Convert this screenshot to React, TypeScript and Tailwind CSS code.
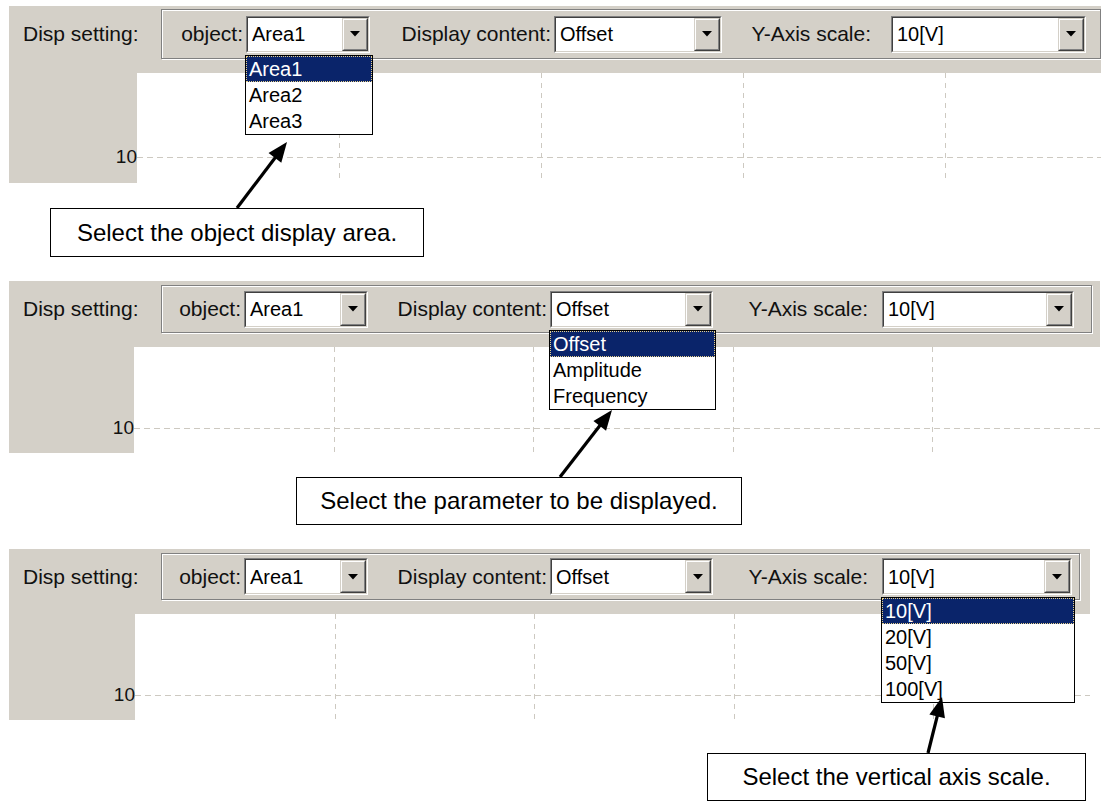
import React from 'react';

type Drop = { items: string[]; at: 0 | 1 | 2 };

interface PanelCfg {
  box: string;
  pad: string;
  frame: string;
  lbl1: string;
  lbl2: string;
  lbl3: string;
  c1: string;
  c2: string;
  c3: string;
  leftCol: string;
  plotH: string;
  tickPad: string;
  lineY: number;
  step: number;
  drop?: Drop;
}

const panels: PanelCfg[] = [
  {
    box: 'mt-0 w-[1092px] h-[177px]',
    pad: 'pt-[3px]',
    frame: 'w-[940px] h-[50px]',
    lbl1: 'w-[84px]',
    lbl2: 'w-[184px] pr-[3px]',
    lbl3: 'w-[169px] pr-[20px]',
    c1: 'w-[124px]',
    c2: 'w-[168px]',
    c3: 'w-[195px]',
    leftCol: 'w-[128px]',
    plotH: 'h-[110px]',
    tickPad: 'pt-[73px]',
    lineY: 84,
    step: 202,
    drop: { items: ['Area1', 'Area2', 'Area3'], at: 0 },
  },
  {
    box: 'mt-[24px] w-[1091px] h-[172px]',
    pad: 'pt-[4px]',
    frame: 'w-[931px] h-[48px]',
    lbl1: 'w-[82px]',
    lbl2: 'w-[182px] pr-[3px]',
    lbl3: 'w-[169px] pr-[14px]',
    c1: 'w-[124px]',
    c2: 'w-[163px]',
    c3: 'w-[192px]',
    leftCol: 'w-[125px]',
    plotH: 'h-[106px]',
    tickPad: 'pt-[70px]',
    lineY: 81,
    step: 199.5,
    drop: { items: ['Offset', 'Amplitude', 'Frequency'], at: 1 },
  },
  {
    box: 'mt-[24px] w-[1081px] h-[171px]',
    pad: 'pt-[4px]',
    frame: 'w-[919px] h-[47px]',
    lbl1: 'w-[82px]',
    lbl2: 'w-[182px] pr-[3px]',
    lbl3: 'w-[169px] pr-[14px]',
    c1: 'w-[124px]',
    c2: 'w-[163px]',
    c3: 'w-[190px]',
    leftCol: 'w-[126px]',
    plotH: 'h-[106px]',
    tickPad: 'pt-[70px]',
    lineY: 81,
    step: 199.5,
    drop: { items: ['10[V]', '20[V]', '50[V]', '100[V]'], at: 2 },
  },
];

function Combo({ value, width, items }: { value: string; width: string; items?: string[] }) {
  return (
    <div className={`relative h-[37px] shrink-0 ${width}`}>
      <div className="h-full border border-t-[#808080] border-l-[#808080] border-r-white border-b-white">
        <div className="relative h-full border border-t-[#404040] border-l-[#404040] border-r-[#d4d0c8] border-b-[#d4d0c8] bg-white flex items-center">
          <span className="pl-[4px] text-[20px] text-black leading-none">{value}</span>
          {/* drop button */}
          <div className="absolute right-0 top-0 bottom-0 w-[26px] border border-t-[#d4d0c8] border-l-[#d4d0c8] border-r-[#404040] border-b-[#404040]">
            <div className="h-full border border-t-white border-l-white border-r-[#808080] border-b-[#808080] bg-[#d4d0c8] flex items-center justify-center">
              <svg width="10" height="6" viewBox="0 0 10 6">
                <polygon points="0,0 10,0 5,5.5" fill="#000" />
              </svg>
            </div>
          </div>
        </div>
      </div>
      {items && (
        <div className="absolute z-10 left-[-1px] top-[calc(100%+2px)] w-[calc(100%+4px)] border border-black bg-white">
          {items.map((it, i) => (
            <div
              key={it}
              className={`h-[26px] flex items-center px-[3px] text-[20px] leading-none
                ${i === 0 ? 'bg-[#0a246a] text-white outline-1 outline-dotted outline-[#e6d08a] -outline-offset-1' : 'text-black'}
              `}
            >
              {it}
            </div>
          ))}
        </div>
      )}
    </div>
  );
}

function Panel({ cfg }: { cfg: PanelCfg }) {
  const xs = [1, 2, 3, 4, 5].map((k) => Math.round(cfg.step * k));
  const open = cfg.drop?.at;

  return (
    <div className={`ml-[9px] bg-[#d4d0c8] overflow-hidden flex flex-col ${cfg.box} ${cfg.pad}`}>
      {/* toolbar */}
      <div className="flex items-center">
        <div className="w-[152px] pl-[14px] shrink-0 text-[21px] text-[#111]">Disp setting:</div>
        <div
          className={`shrink-0 flex items-center border border-[#808080] shadow-[inset_1px_1px_0_#fff,1px_1px_0_#fff] ${cfg.frame}`}
        >
          <div className={`shrink-0 text-right pr-[3px] text-[21px] text-[#111] ${cfg.lbl1}`}>object:</div>
          <Combo value="Area1" width={cfg.c1} items={open === 0 ? cfg.drop?.items : undefined} />
          <div className={`shrink-0 text-right text-[21px] text-[#111] ${cfg.lbl2}`}>Display content:</div>
          <Combo value="Offset" width={cfg.c2} items={open === 1 ? cfg.drop?.items : undefined} />
          <div className={`shrink-0 text-right text-[21px] text-[#111] ${cfg.lbl3}`}>Y-Axis scale:</div>
          <Combo value="10[V]" width={cfg.c3} items={open === 2 ? cfg.drop?.items : undefined} />
        </div>
      </div>

      {/* plot */}
      <div className="mt-[14px] flex">
        <div className={`shrink-0 text-right text-[19px] leading-[22px] text-[#111] ${cfg.leftCol} ${cfg.tickPad}`}>10</div>
        <div className={`relative flex-1 bg-white ${cfg.plotH}`}>
          <svg className="absolute inset-0 w-full h-full">
            <line x1={0} y1={cfg.lineY + 0.5} x2={2000} y2={cfg.lineY + 0.5} stroke="#cdc9c1" strokeDasharray="6 4" />
            {xs.map((x) => (
              <line key={x} x1={x + 0.5} y1={0} x2={x + 0.5} y2={200} stroke="#cdc9c1" strokeDasharray="5 5" />
            ))}
          </svg>
        </div>
      </div>
    </div>
  );
}

const arrows = [
  { x1: 237, y1: 208, x2: 287, y2: 142 },
  { x1: 560, y1: 477, x2: 612, y2: 410 },
  { x1: 928, y1: 753, x2: 942, y2: 697 },
];

function Arrow({ x1, y1, x2, y2 }: { x1: number; y1: number; x2: number; y2: number }) {
  const dx = x2 - x1;
  const dy = y2 - y1;
  const len = Math.hypot(dx, dy);
  const ux = dx / len;
  const uy = dy / len;
  const bx = x2 - ux * 20;
  const by = y2 - uy * 20;
  const px = -uy * 8;
  const py = ux * 8;
  return (
    <g>
      <line x1={x1} y1={y1} x2={x2 - ux * 14} y2={y2 - uy * 14} stroke="#000" strokeWidth={3.2} />
      <polygon points={`${x2},${y2} ${bx + px},${by + py} ${bx - px},${by - py}`} fill="#000" />
    </g>
  );
}

export default function App() {
  return (
    <div className="relative w-[1101px] h-[801px] overflow-hidden bg-white pt-[6px] font-['Liberation_Sans',Arial,sans-serif]">
      <Panel cfg={panels[0]} />

      <div className="mt-[25px] ml-[50px] w-[374px] h-[49px] border-[1.5px] border-black flex items-center justify-center text-[24px] text-black">
        Select the object display area.
      </div>

      <Panel cfg={panels[1]} />

      <div className="mt-[24px] ml-[296px] w-[446px] h-[48px] border-[1.5px] border-black flex items-center justify-center text-[24px] text-black">
        Select the parameter to be displayed.
      </div>

      <Panel cfg={panels[2]} />

      <div className="mt-[33px] ml-[707px] w-[379px] h-[48px] border-[1.5px] border-black flex items-center justify-center text-[24px] text-black">
        Select the vertical axis scale.
      </div>

      {/* callout arrows */}
      <svg className="absolute left-0 top-0 pointer-events-none z-20" width={1101} height={801}>
        {arrows.map((a, i) => (
          <Arrow key={i} {...a} />
        ))}
      </svg>
    </div>
  );
}
